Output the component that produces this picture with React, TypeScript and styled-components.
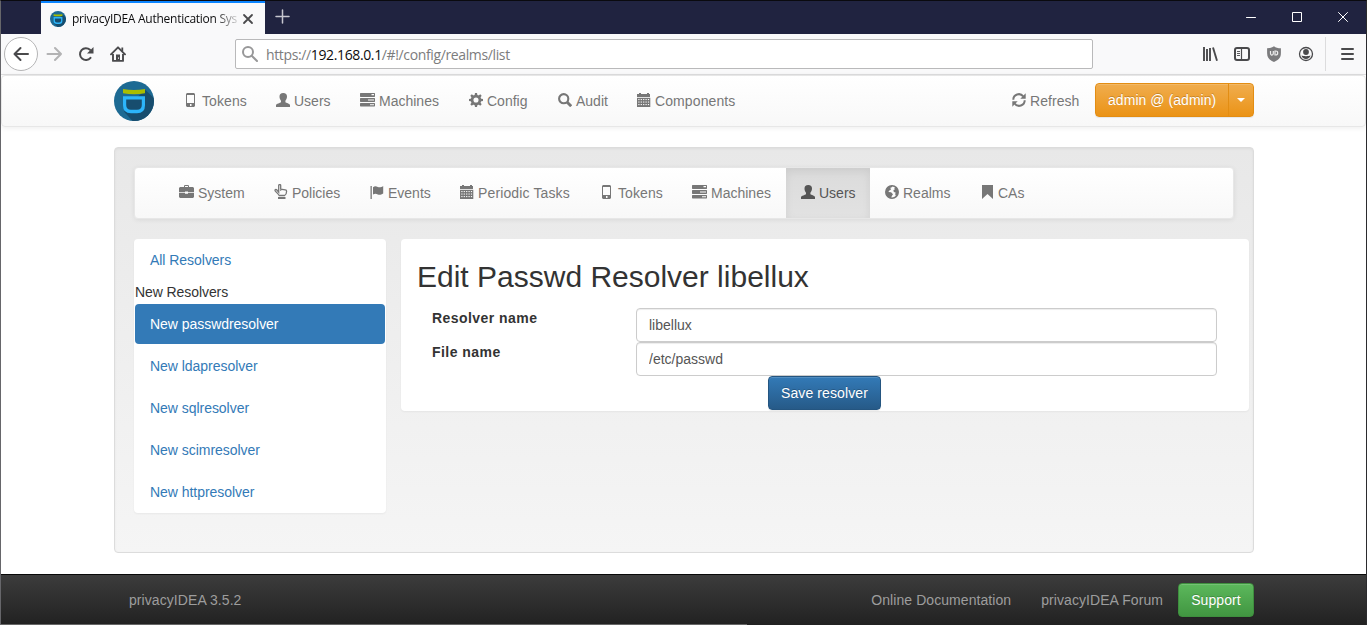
import React from 'react';
import styled, { createGlobalStyle, css } from 'styled-components';

const Global = createGlobalStyle`
  * { box-sizing: border-box; }
  html, body { margin: 0; padding: 0; overflow: hidden; }
  body { font: 14px/20px "Liberation Sans", Arial, sans-serif; color: #333; background: #fff; }
  svg { display: block; flex: none; }
  a { text-decoration: none; color: inherit; }
`;

const Window = styled.div`
  width: 1367px;
  height: 625px;
  display: flex;
  flex-direction: column;
  overflow: hidden;
  border-top: 1px solid #0a0a0f;
  border-left: 1px solid #66666a;
  border-right: 1px solid #2b2b2e;
  background: #fff;
`;

/* ---------- browser chrome ---------- */
const TitleBar = styled.div`
  height: 33px;
  flex: none;
  display: flex;
  background: #202340;
  padding-left: 40px;
`;
const Tab = styled.div`
  width: 224px;
  height: 33px;
  display: flex;
  align-items: center;
  padding: 0 11px 0 9px;
  background: #f9f9fa;
  border-top: 2px solid #0a84ff;
`;
const TabTitle = styled.div`
  flex: 1;
  margin-left: 6px;
  white-space: nowrap;
  font: 12px/16px "Open Sans", "Noto Sans", sans-serif;
  letter-spacing: -0.26px;
  color: #0c0c0d;
  mask-image: linear-gradient(to right, #000 142px, transparent 170px);
`;
const NewTab = styled.div`
  padding: 8px 0 0 10px;
`;
const WindowButtons = styled.div`
  margin-left: auto;
  display: flex;
  align-items: center;
  gap: 36px;
  padding: 0 18px 2px 0;
`;
const Toolbar = styled.div`
  height: 41px;
  flex: none;
  display: flex;
  align-items: center;
  background: #f9f9fa;
  border-bottom: 1px solid #dededf;
  padding: 0 0 1px 3px;
`;
const BackButton = styled.div`
  width: 34px;
  height: 34px;
  border: 1px solid #b5b5b6;
  border-radius: 50%;
  background: #fff;
  display: flex;
  align-items: center;
  justify-content: center;
`;
const NavIcons = styled.div`
  display: flex;
  align-items: center;
  gap: 16px;
  margin-left: 8px;
`;
const UrlBar = styled.div`
  width: 858px;
  height: 30px;
  margin-left: 109px;
  border: 1px solid #b9b9ba;
  border-radius: 2px;
  background: #fff;
  display: flex;
  align-items: center;
  padding-left: 6px;
  gap: 8px;
`;
const Url = styled.span`
  padding-top: 2px;
  font: 14px/20px "Open Sans", "Noto Sans", sans-serif;
  letter-spacing: -0.37px;
  color: #7c7c7d;
  white-space: nowrap;
  b { font-weight: 400; color: #0c0c0d; }
`;
const ToolIcons = styled.div`
  margin-left: 109px;
  display: flex;
  gap: 16px;
`;
const MenuButton = styled.div`
  margin-left: 11px;
  height: 34px;
  padding: 1px 0 0 14px;
  border-left: 1px solid #dcdcdd;
  display: flex;
  align-items: center;
`;

/* ---------- page ---------- */
const Page = styled.div`
  flex: 1;
  display: flex;
  flex-direction: column;
`;
const barLook = css`
  height: 52px;
  border: 1px solid #e7e7e7;
  border-radius: 4px;
  background: linear-gradient(#fff, #f8f8f8);
  box-shadow: inset 0 1px 0 rgba(255, 255, 255, .15), 0 1px 5px rgba(0, 0, 0, .075);
`;
const TopNav = styled.nav`
  ${barLook}
  flex: none;
  display: flex;
  padding-left: 112px;
`;
const SubNav = styled.nav`
  ${barLook}
  display: flex;
  padding-left: 29px;
`;
const Brand = styled.a`
  width: 55px;
  padding-top: 5px;
`;
const NavItem = styled.a<{ $w: number; $active?: boolean; $ls?: number }>`
  width: ${p => p.$w}px;
  height: 50px;
  flex: none;
  display: flex;
  align-items: flex-start;
  gap: 4px;
  padding: 15px 0 0 15px;
  white-space: nowrap;
  letter-spacing: ${p => p.$ls ?? 0}px;
  color: ${p => (p.$active ? '#555' : '#777')};
  ${p => p.$active && css`
    background: linear-gradient(#dbdbdb, #e2e2e2);
    box-shadow: inset 0 3px 9px rgba(0, 0, 0, .075);
  `}
  svg { margin-top: 2px; }
`;
const RightNav = styled.div`
  display: flex;
  margin: 0 111px 0 auto;
`;
const Account = styled.div`
  display: flex;
  height: 34px;
  margin-top: 7px;
  border: 1px solid #e38d13;
  border-radius: 4px;
  background: linear-gradient(#f0ad4e, #eb9316);
  box-shadow: inset 0 1px 0 rgba(255, 255, 255, .15), 0 1px 1px rgba(0, 0, 0, .075);
  color: #fff;
  text-shadow: 0 -1px 0 rgba(0, 0, 0, .2);
`;
const AccountName = styled.span`
  width: 133px;
  padding: 6px 0 0 12px;
  border-right: 1px solid #e38d13;
  white-space: nowrap;
  letter-spacing: 0.05px;
`;
const Caret = styled.span`
  width: 24px;
  display: flex;
  align-items: center;
  justify-content: center;
  &::after {
    content: '';
    border: 4px solid transparent;
    border-top-color: #fff;
    border-bottom: 0;
  }
`;
const Well = styled.main`
  width: 1140px;
  height: 406px;
  flex: none;
  margin: 20px 0 0 113px;
  padding: 19px;
  border: 1px solid #dcdcdc;
  border-radius: 4px;
  background: linear-gradient(#e8e8e8, #f5f5f5);
  box-shadow: inset 0 1px 3px rgba(0, 0, 0, .05), 0 1px 0 rgba(255, 255, 255, .1);
`;
const Columns = styled.div`
  display: flex;
  align-items: flex-start;
  gap: 15px;
  margin: 20px -15px 0 0;
`;
const Panel = styled.section`
  background: #fff;
  border-radius: 4px;
  box-shadow: 0 1px 2px rgba(0, 0, 0, .05);
`;
const SidePanel = styled(Panel)`
  width: 252px;
  height: 274px;
  padding: 1px;
  display: flex;
  flex-direction: column;
`;
const SideLink = styled.a<{ $active?: boolean }>`
  height: 40px;
  flex: none;
  padding: 10px 15px;
  margin-bottom: 2px;
  border-radius: 4px;
  letter-spacing: -0.04px;
  color: ${p => (p.$active ? '#fff' : '#337ab7')};
  background: ${p => (p.$active ? '#337ab7' : 'transparent')};
`;
const SideHeading = styled.div`
  height: 22px;
  flex: none;
  letter-spacing: -0.08px;
`;
const FormPanel = styled(Panel)`
  width: 848px;
  height: 172px;
  padding: 21px 16px 0;
`;
const Title = styled.h2`
  margin: 0 0 15px;
  font-size: 30px;
  font-weight: 400;
  line-height: 33px;
  white-space: nowrap;
`;
const Row = styled.div`
  display: grid;
  grid-template-columns: 204px 581px;
  padding-left: 15px;
  height: 34px;
`;
const Label = styled.label`
  font-weight: 700;
  letter-spacing: 0.45px;
`;
const Field = styled.input`
  height: 34px;
  padding: 6px 12px;
  border: 1px solid #ccc;
  border-radius: 4px;
  font: inherit;
  color: #555;
  background: #fff;
  box-shadow: inset 0 1px 1px rgba(0, 0, 0, .075);
  outline: none;
`;
const Button = styled.button<{ $from: string; $to: string; $line: string; $w: number }>`
  width: ${p => p.$w}px;
  height: 34px;
  padding: 0;
  display: block;
  border: 1px solid ${p => p.$line};
  border-radius: 4px;
  background: linear-gradient(${p => p.$from}, ${p => p.$to});
  color: #fff;
  font: inherit;
  letter-spacing: 0.1px;
  white-space: nowrap;
  text-shadow: 0 -1px 0 rgba(0, 0, 0, .2);
  box-shadow: inset 0 1px 0 rgba(255, 255, 255, .15), 0 1px 1px rgba(0, 0, 0, .075);
`;
const Actions = styled.div`
  padding-left: 351px;
`;
const Footer = styled.footer`
  height: 50px;
  flex: none;
  margin-top: 21px;
  display: flex;
  align-items: center;
  border-top: 1px solid #080808;
  background: linear-gradient(#3c3c3c, #222);
  color: #9d9d9d;
  letter-spacing: 0.07px;
  padding: 0 112px 0 128px;
`;
const FooterLinks = styled.div`
  margin-left: auto;
  display: flex;
  align-items: center;
  gap: 30px;
  white-space: nowrap;
  button { margin-left: -15px; }
`;
const BottomEdge = styled.div`
  height: 1px;
  flex: none;
  background: linear-gradient(to right, #666 746px, #222 746px);
`;

/* ---------- icons ---------- */
const Glyph = ({ children, width = 14 }: { children: React.ReactNode; width?: number }) => (
  <svg width={width} height="14" viewBox={`0 0 ${width} 14`} fill="currentColor">{children}</svg>
);
const Phone = () => (
  <Glyph><path fillRule="evenodd" d="M3 0h7l1 1v12l-1 1H3l-1-1V1zM3 2v8h7V2zM6 11v2h1.500v-2z" /></Glyph>
);
const Person = () => (
  <Glyph><path d="M7.200 0C9.800 0 11 1.400 11 3.600c0 1.700-.6 3.200-1.600 4.200v1.400c1.100.9 4.300 1.400 4.800 2.800V14H0v-2c.4-1.400 3.900-1.900 5-2.800V7.800C4 6.800 3.500 5.300 3.500 3.600 3.500 1.400 4.700 0 7.200 0z" /></Glyph>
);
const Tasks = () => (
  <Glyph width={15}>
    <path fillRule="evenodd" d="M.5 0h14l.5.500v3l-.5.500H.5L0 3.500v-3zM11.500 1v1.200H14V1zM.5 5h14l.5.500v3l-.5.500H.5L0 8.500v-3zM8 6.500v1h6v-1zM.5 10h14l.5.500v2.500l-.5.500H.5L0 13v-2.500zM10 11.300v1h4v-1z" />
  </Glyph>
);
const Cog = () => (
  <Glyph>
    <circle cx="7" cy="7" r="3.900" fill="none" stroke="currentColor" strokeWidth="2.700" />
    {[0, 45, 90, 135, 180, 225, 270, 315].map(a => (
      <path key={a} d="M5.500 2.800 6 0h2l.5 2.800z" transform={`rotate(${a} 7 7)`} />
    ))}
  </Glyph>
);
const Magnifier = () => (
  <Glyph><g fill="none" stroke="currentColor"><circle cx="5.700" cy="5.700" r="4.600" strokeWidth="2.100" /><path d="m9 9 4.200 4.200" strokeWidth="2.900" /></g></Glyph>
);
const Calendar = () => (
  <Glyph>
    <path d="M0 1h2V0h2v1h6V0h2v1h1v3H0z" />
    <path d="M0 4.800h13.300V14H0z" />
    <g fill="#fbfbfb">
      {[6, 8.500, 11].map(y => [1.300, 3.700, 6.100, 8.500, 10.900].map(x => (
        <rect key={`${x}-${y}`} x={x} y={y} width="1.200" height="1.100" />
      )))}
    </g>
  </Glyph>
);
const Refresh = () => (
  <Glyph>
    <g fill="none" stroke="currentColor" strokeWidth="2"><path d="M1.300 6.700A5.500 5.500 0 0 1 11.200 3.400" /><path d="M12.700 7.300A5.500 5.500 0 0 1 2.800 10.600" /></g>
    <path d="M13.700.3v5.400H8.300zM.3 13.700V8.300h5.400z" />
  </Glyph>
);
const Briefcase = () => (
  <Glyph width={15}>
    <path fillRule="evenodd" d="M5 2V.8L5.800 0h3.400l.8.8V2h4l1 1v4.300H9V6.500H6v.8H0V3l1-1zm1-1v1h3V1zM0 8h6v.8h3V8h6v4l-1 1H1l-1-1z" />
  </Glyph>
);
const Pointer = () => (
  <svg width="14" height="15" viewBox="0 0 14 15" style={{ marginTop: 1, marginLeft: -1 }}>
    <path d="M4.700 8.200V1.500c0-1.300 2-1.300 2 0v3.700l4.600.6c.9.100 1.300.6 1.300 1.400 0 2-.6 3.500-2 4.300H5.200C4.300 9.900 2.500 8.700 1.200 6.800c-.6-1 .7-1.700 1.500-1zM6.700 5v1.800" fill="none" stroke="currentColor" strokeWidth="1.300" />
    <path d="M4 13h7.500v2H4z" fill="currentColor" />
  </svg>
);
const Flag = () => (
  <Glyph><path d="M.5 1h1.300v13H.5zM3 2.200c2-1.500 3.300-.8 4.800-.2 1.700.6 3.200.5 5.400-1.100v7.500c-2.200 1.500-3.700 1.600-5.400 1C6.300 8.800 5 8.200 3 9.600z" /></Glyph>
);
const Globe = () => (
  <Glyph>
    <circle cx="7" cy="7" r="6.200" fill="none" stroke="currentColor" strokeWidth="1.500" />
    <path d="M1 4.200 4 1.200 7.800.6 6.800 2.300 5 3l1.200.9-.8 1.200L4 5.700l-.5 1.300 2.600.3L8 9.200 6.800 11 6 13.500 2.500 12 .7 9zM9.300 2.900l1.600-.9 2.500 3.800-.2 3-2.100 2.700-.9-2.300.4-1.700-1.800-.6-.4-1.900 1.400-.6z" />
  </Glyph>
);
const Bookmark = () => (
  <Glyph><path d="M2 0h11v14L7.500 9 2 14z" /></Glyph>
);
const Logo = ({ size }: { size: number }) => (
  <svg width={size} height={size} viewBox="0 0 40 40">
    <clipPath id={`disc${size}`}><circle cx="20" cy="20" r="20" /></clipPath>
    <circle cx="20" cy="20" r="20" fill="#1d6a93" />
    <path clipPath={`url(#disc${size})`} fill="#174d6e" d="M31 8.500 44 21v23H22L10 30.500z" />
    <path fill="#a9bd00" d="M9 8q11 2 22 0v4.300q-11 2-22 0z" />
    <path fill="#174d6e" d="M12 18h16v11H12z" />
    <path fill="#2cb5fa" fillRule="evenodd" d="M9 15.200h22v9q0 8-8 8h-6q-8 0-8-8zM12.200 18.500v5.500q0 4.800 4.800 4.800h6q4.800 0 4.800-4.800v-5.500z" />
  </svg>
);
const Line = ({ d, size = 16, w = 2, color = '#4a4a4c' }: { d: string; size?: number; w?: number; color?: string }) => (
  <svg width={size} height={size} viewBox={`0 0 ${size} ${size}`} fill="none" stroke={color} strokeWidth={w} strokeLinecap="round" strokeLinejoin="round"><path d={d} /></svg>
);
const Home = () => (
  <svg width="16" height="16" viewBox="0 0 16 16" fill="none" stroke="#4a4a4c">
    <path d="M1 8.300 8 1.300l7 7" strokeWidth="1.900" strokeLinecap="round" strokeLinejoin="round" />
    <path d="M3 8v6.900h10V8" strokeWidth="1.900" strokeLinejoin="round" />
    <path d="M6 8.500h4V15H6zM8 11.500v1.300h1v-1.300z" fill="#4a4a4c" fillRule="evenodd" stroke="none" />
    <path d="M12.300 1.500V5" strokeWidth="1.800" />
  </svg>
);
const Library = () => (
  <svg width="16" height="16" viewBox="0 0 16 16" fill="none" stroke="#4a4a4c" strokeWidth="1.900">
    <path d="M2 1v14M5 3v12M8 2v13" /><path d="m11 1.500 4 13.300" />
  </svg>
);
const Sidebar = () => (
  <svg width="16" height="16" viewBox="0 0 16 16" fill="none" stroke="#4a4a4c">
    <rect x="1" y="2" width="14" height="12" rx="2" strokeWidth="2" /><path d="M7.500 2v12" strokeWidth="1.200" /><path d="M3 5.500h3M3 7.500h3M3 9.500h3" strokeWidth=".9" />
  </svg>
);
const Shield = () => (
  <svg width="16" height="16" viewBox="0 0 16 16">
    <path fill="#7b7b7d" d="M8 .3c1.700 1.400 4 2 6.900 2v5C14.900 12 12 14.500 8 16 4 14.500 1.100 12 1.100 7.300v-5C4 2.300 6.300 1.700 8 .3z" />
    <path d="M4.500 5v2.600q0 1.500 1.400 1.500t1.400-1.500V5M9 5v4h.7q2 0 2-2t-2-2z" fill="none" stroke="#eee" strokeWidth="1.200" />
  </svg>
);
const Avatar = () => (
  <svg width="16" height="16" viewBox="0 0 16 16">
    <circle cx="8" cy="8" r="6.500" fill="none" stroke="#4a4a4c" strokeWidth="1.300" />
    <circle cx="8" cy="6" r="2.900" fill="#4a4a4c" /><path fill="#4a4a4c" d="M3.500 9.600c1 .2 2.500.7 4.500.7s3.500-.5 4.500-.7c-.4 2.300-2.300 3.500-4.500 3.500s-4.100-1.200-4.500-3.500z" />
  </svg>
);

const topItems = [
  { text: 'Tokens', w: 92, ls: 0.1, icon: <Phone /> },
  { text: 'Users', w: 84, icon: <Person /> },
  { text: 'Machines', w: 109, icon: <Tasks /> },
  { text: 'Config', w: 89, icon: <Cog /> },
  { text: 'Audit', w: 79, icon: <Magnifier /> },
  { text: 'Components', w: 129, ls: 0.1, icon: <Calendar /> },
];
const subItems = [
  { text: 'System', w: 96, icon: <Briefcase /> },
  { text: 'Policies', w: 95, icon: <Pointer /> },
  { text: 'Events', w: 90, icon: <Flag /> },
  { text: 'Periodic Tasks', w: 140, ls: 0.13, icon: <Calendar /> },
  { text: 'Tokens', w: 92, ls: 0.1, icon: <Phone /> },
  { text: 'Machines', w: 109, icon: <Tasks /> },
  { text: 'Users', w: 84, icon: <Person />, active: true },
  { text: 'Realms', w: 95, icon: <Globe /> },
  { text: 'CAs', w: 74, icon: <Bookmark /> },
];
const resolvers = ['passwd', 'ldap', 'sql', 'scim', 'http'];

export default function App() {
  return (
    <>
      <Global />
      <Window>
        <TitleBar>
          <Tab>
            <Logo size={16} />
            <TabTitle>privacyIDEA Authentication Sys</TabTitle>
            <Line d="M2 2l8 8M10 2l-8 8" size={12} w={1.800} />
          </Tab>
          <NewTab><Line d="M7.500 1v13M1 7.500h13" size={15} w={1.500} color="#c6c6cf" /></NewTab>
          <WindowButtons>
            <Line d="M.5 5.500h9" size={10} w={1} color="#fff" />
            <svg width="10" height="10" fill="none" stroke="#fff"><path d="M.5.500h9v9h-9z" /></svg>
            <Line d="M.5.500l9 9M9.500.500l-9 9" size={10} w={1} color="#fff" />
          </WindowButtons>
        </TitleBar>
        <Toolbar>
          <BackButton><Line d="M15 8H1.500M7.500 2l-6 6 6 6" /></BackButton>
          <NavIcons>
            <Line d="M1.500 8H15M9 2l6 6-6 6" color="#b3b3b4" />
            <svg width="16" height="16" viewBox="0 0 16 16"><path d="M12.500 11.800A5.900 5.900 0 1 1 12 3.800" fill="none" stroke="#4a4a4c" strokeWidth="2" strokeLinecap="round" /><path d="M15.500 1v6.500H9z" fill="#4a4a4c" /></svg>
            <Home />
          </NavIcons>
          <UrlBar>
            <svg width="16" height="16" viewBox="0 0 16 16" fill="none" stroke="#989899" strokeWidth="2" strokeLinecap="round"><circle cx="6" cy="6" r="5" /><path d="m9.700 9.700 5.300 5.300" /></svg>
            <Url>https://<b>192.168.0.1</b>/#!/config/realms/list</Url>
          </UrlBar>
          <ToolIcons><Library /><Sidebar /><Shield /><Avatar /></ToolIcons>
          <MenuButton><Line d="M2 3h11M2 8h11M2 13h11" /></MenuButton>
        </Toolbar>
        <Page>
          <TopNav>
            <Brand><Logo size={40} /></Brand>
            {topItems.map(i => <NavItem key={i.text} $w={i.w} $ls={i.ls}>{i.icon}<span>{i.text}</span></NavItem>)}
            <RightNav>
              <NavItem $w={98} $ls={0.05}><Refresh /><span>Refresh</span></NavItem>
              <Account>
                <AccountName>admin @ (admin)</AccountName>
                <Caret />
              </Account>
            </RightNav>
          </TopNav>
          <Well>
            <SubNav>
              {subItems.map(i => <NavItem key={i.text} $w={i.w} $ls={i.ls} $active={i.active}>{i.icon}<span>{i.text}</span></NavItem>)}
            </SubNav>
            <Columns>
              <SidePanel>
                <SideLink>All Resolvers</SideLink>
                <SideHeading>New Resolvers</SideHeading>
                {resolvers.map((r, n) => <SideLink key={r} $active={n === 0}>New {r}resolver</SideLink>)}
              </SidePanel>
              <FormPanel>
                <Title>Edit Passwd Resolver libellux</Title>
                <Row><Label>Resolver name</Label><Field defaultValue="libellux" /></Row>
                <Row><Label>File name</Label><Field defaultValue="/etc/passwd" /></Row>
                <Actions><Button $w={113} $from="#337ab7" $to="#265a88" $line="#245580">Save resolver</Button></Actions>
              </FormPanel>
            </Columns>
          </Well>
          <Footer>
            <span>privacyIDEA 3.5.2</span>
            <FooterLinks>
              <a>Online Documentation</a>
              <a>privacyIDEA Forum</a>
              <Button $w={76} $from="#5cb85c" $to="#419641" $line="#3e8f3e">Support</Button>
            </FooterLinks>
          </Footer>
          <BottomEdge />
        </Page>
      </Window>
    </>
  );
}
